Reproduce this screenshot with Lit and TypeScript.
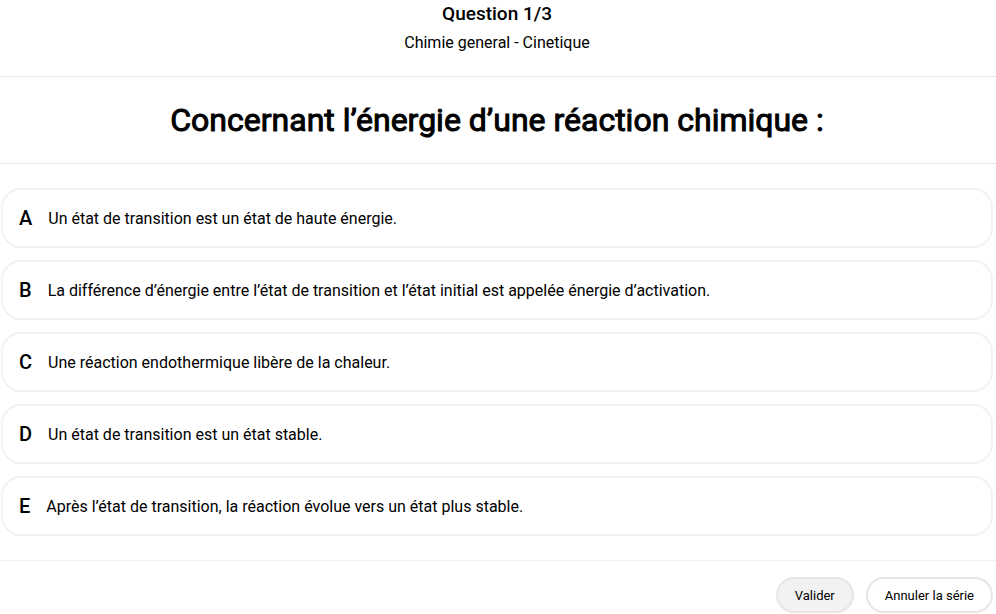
import { LitElement, html, css } from "lit";
import { customElement, state } from "lit/decorators.js";

interface Answer {
  letter: string;
  text: string;
}

const ANSWERS: Answer[] = [
  { letter: "A", text: "Un état de transition est un état de haute énergie." },
  { letter: "B", text: "La différence d’énergie entre l’état de transition et l’état initial est appelée énergie d’activation." },
  { letter: "C", text: "Une réaction endothermique libère de la chaleur." },
  { letter: "D", text: "Un état de transition est un état stable." },
  { letter: "E", text: "Après l’état de transition, la réaction évolue vers un état plus stable." },
];

@customElement("app-root")
export class AppRoot extends LitElement {
  @state() private selected = new Set<string>();

  static styles = css`
    :host {
      display: block;
      font-family: Roboto, sans-serif;
      font-size: 16px;
      line-height: 22px;
      color: #000;
      background: #fff;
    }
    .header {
      display: flex;
      flex-direction: column;
      align-items: center;
      gap: 7px;
      padding: 3px 3px 22px 1px;
      border-bottom: 1px solid #e6e6e6;
    }
    .progress {
      margin: 0;
      font-size: 19px;
      font-weight: 500;
    }
    .topic {
      margin: 0;
    }
    .question {
      margin: 0;
      padding: 24px 3px 24px 1px;
      font-size: 32px;
      line-height: 38px;
      font-weight: 400;
      -webkit-text-stroke: 1px currentColor;
      text-align: center;
      border-bottom: 1px solid #e6e6e6;
    }
    .answers {
      display: flex;
      flex-direction: column;
      gap: 12px;
      padding: 24px 3px 24px 1px;
    }
    .answer {
      display: flex;
      align-items: center;
      gap: 16px;
      box-sizing: border-box;
      min-height: 60px;
      padding: 2px 16px 0;
      border: 2px solid #f2f2f2;
      border-radius: 20px;
      background: #fff;
      color: inherit;
      font: inherit;
      text-align: left;
      cursor: pointer;
    }
    .answer[aria-pressed="true"] {
      background: #f2f2f2;
    }
    .letter {
      padding-bottom: 2px;
      font-size: 20px;
      font-weight: 500;
    }
    .footer {
      display: flex;
      justify-content: flex-end;
      gap: 12px;
      padding: 16px 3px 0;
      border-top: 1px solid #f2f2f2;
    }
    .action {
      height: 36px;
      padding: 2px 17px 0;
      border: 2px solid #e6e6e6;
      border-radius: 18px;
      background: #fff;
      color: inherit;
      font: inherit;
      font-size: 13px;
      cursor: pointer;
    }
    .primary {
      background: #f2f2f2;
    }
  `;

  private toggle(letter: string) {
    const next = new Set(this.selected);
    if (!next.delete(letter)) next.add(letter);
    this.selected = next;
  }

  render() {
    return html`
      <header class="header">
        <p class="progress">Question 1/3</p>
        <p class="topic">Chimie general - Cinetique</p>
      </header>
      <main>
        <h1 class="question">Concernant l’énergie d’une réaction chimique :</h1>
        <div class="answers">
          ${ANSWERS.map(
            ({ letter, text }) => html`
              <button
                class="answer"
                type="button"
                aria-pressed=${this.selected.has(letter) ? "true" : "false"}
                @click=${() => this.toggle(letter)}
              >
                <span class="letter">${letter}</span>
                <span>${text}</span>
              </button>
            `,
          )}
        </div>
      </main>
      <footer class="footer">
        <button class="action primary" type="button">Valider</button>
        <button class="action" type="button">Annuler la série</button>
      </footer>
    `;
  }
}
